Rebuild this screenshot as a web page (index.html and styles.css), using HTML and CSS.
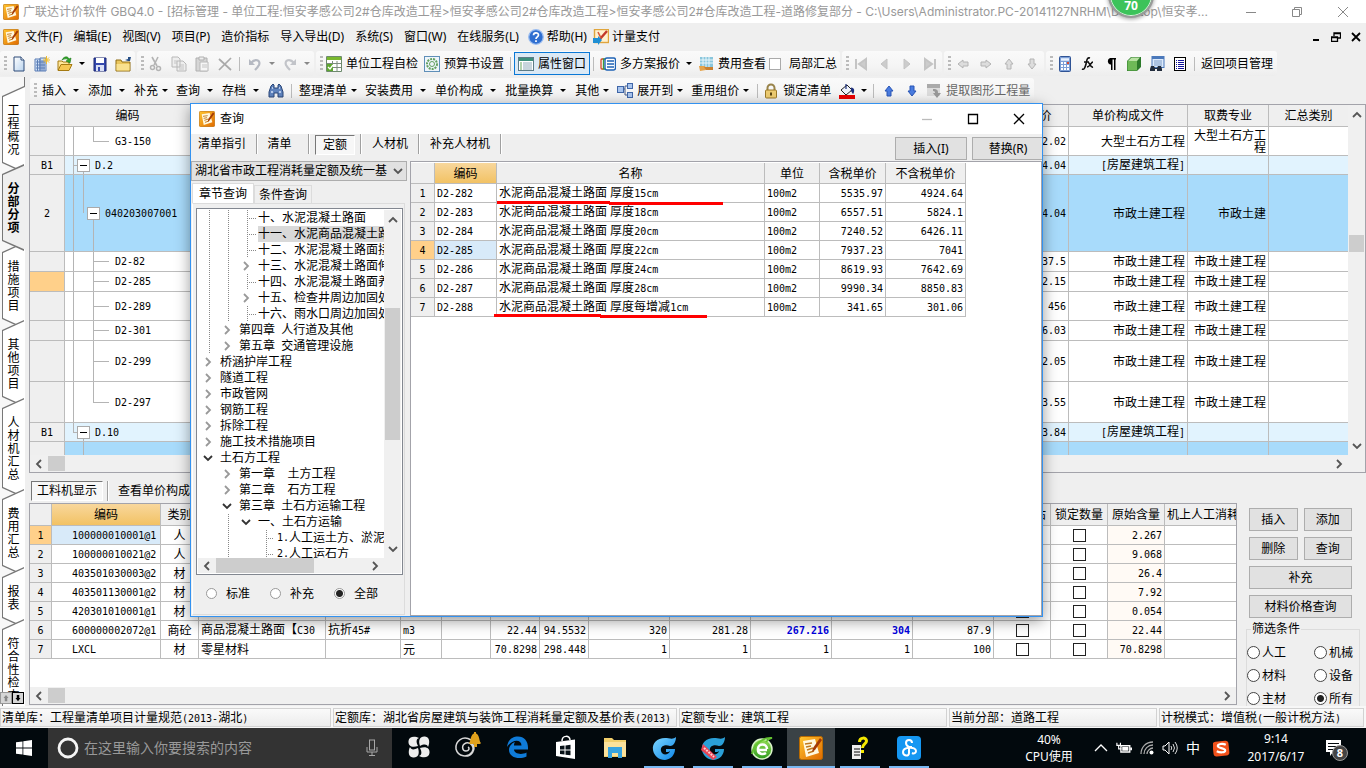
FILE: index.html
```html
<!DOCTYPE html>
<html lang="zh-CN">
<head>
<meta charset="utf-8">
<title>广联达计价软件 GBQ4.0</title>
<link rel="stylesheet" href="styles.css">
</head>
<body>
<svg class="defs" aria-hidden="true">
  <defs>
    <linearGradient id="gOrange" x1="0" y1="0" x2="1" y2="1"><stop offset="0" stop-color="#ffc52e"/><stop offset="1" stop-color="#e06a00"/></linearGradient>
    <linearGradient id="gPage" x1="0" y1="0" x2="1" y2="1"><stop offset="0" stop-color="#fff"/><stop offset="1" stop-color="#b9d3ee"/></linearGradient>
    <linearGradient id="gSwirl" x1="0" y1="0" x2="1" y2="1"><stop offset="0" stop-color="#7fd8ff"/><stop offset="1" stop-color="#0a84e8"/></linearGradient>
    <linearGradient id="gGreen" x1="0" y1="0" x2="0" y2="1"><stop offset="0" stop-color="#9be05a"/><stop offset="1" stop-color="#2c9a1c"/></linearGradient>
    <symbol id="app" viewBox="0 0 24 24"><rect x="0.5" y="0.5" width="23" height="23" rx="2" fill="url(#gOrange)" stroke="#b96a00"/><path d="M4 5l12-2 4 14-13 4z" fill="#fff8df"/><path d="M6 8l7-1M7 11l5-1M8 14l6-2M9 17l6-2" stroke="#c07a20" stroke-width="1.4"/><path d="M21 2l-7 10-1 4 3-2 7-10z" fill="#a33a06"/></symbol>
    <symbol id="new" viewBox="0 0 16 16"><path d="M3 1h7l3 3v11H3z" fill="url(#gPage)" stroke="#2d4a78"/><path d="M10 1v3h3" fill="#fff" stroke="#2d4a78"/></symbol>
    <symbol id="newproj" viewBox="0 0 16 16"><path d="M1 3h5v12H1zM6 2h6v13H6z" fill="#cfe0f6" stroke="#5a7db5"/><path d="M2 6h9M2 9h9M2 12h9M8 4v11M10 4v11M3.500 4v11" stroke="#5a7db5"/><path d="M12.500 0v8M9 4h7M10 1.500l5 5M15 1.500l-5 5" stroke="#efbc2a"/></symbol>
    <symbol id="open" viewBox="0 0 16 16"><path d="M1 14V5h4l1 1h6v2" fill="#ffe79a" stroke="#a57a12"/><path d="M1 14.500l3-6h11l-3 6z" fill="#f5c752" stroke="#a57a12"/><path d="M5 4c2-4 6-4 7-1l2-1-1 5-4-2 2-1c-1-2-4-1-6 0z" fill="#31a52b" stroke="#157512" stroke-width=".6"/></symbol>
    <symbol id="save" viewBox="0 0 16 16"><path d="M2 2h12v13H2z" fill="#3448ad" stroke="#1b2672"/><rect x="4" y="2" width="8" height="5" fill="#fff"/><rect x="4" y="9" width="8" height="6" fill="#d9dff5"/><rect x="6" y="11" width="2" height="4" fill="#3448ad"/></symbol>
    <symbol id="folder" viewBox="0 0 16 16"><path d="M1 4h5l1 2h8v9H1z" fill="#eac65d" stroke="#8f6d14"/><path d="M1.500 8h13v6.500h-13z" fill="#f9e18f"/><path d="M10 4l3-1 0-2 3 0-1 4-2 0z" fill="#274f86"/></symbol>
    <symbol id="cut" viewBox="0 0 16 16"><path d="M4 1l5 9M10 1L6 9" stroke="#b4b4b4" stroke-width="1.600"/><circle cx="4.500" cy="11.500" r="2" fill="none" stroke="#b4b4b4" stroke-width="1.500"/><circle cx="10.500" cy="12.500" r="2" fill="none" stroke="#b4b4b4" stroke-width="1.500"/></symbol>
    <symbol id="copy" viewBox="0 0 16 16"><path d="M1 1h6l2 2v8H1zM6 5h6l3 3v7H6z" fill="#eee" stroke="#b8b8b8"/><path d="M8 9h5M8 11h5M8 13h5M3 5h3M3 7h3" stroke="#c4c4c4"/></symbol>
    <symbol id="paste" viewBox="0 0 16 16"><path d="M2 2h11v13H2z" fill="#d6d6d6" stroke="#b0b0b0"/><path d="M5 1h5v3H5z" fill="#eee" stroke="#b0b0b0"/><path d="M6 6h8v9H6z" fill="#f6f6f6" stroke="#b8b8b8"/><path d="M8 9h5M8 11h5" stroke="#c4c4c4"/></symbol>
    <symbol id="del" viewBox="0 0 16 16"><path d="M2 3l12 11M14 2L2 14" stroke="#aaa" stroke-width="1.700" fill="none"/></symbol>
    <symbol id="undo" viewBox="0 0 16 16"><path d="M4 7c4-5 10-3 8 2-1 2-3 4-4 5" fill="none" stroke="#b5b9c2" stroke-width="2.200"/><path d="M2 3v6h6z" fill="#b5b9c2"/></symbol>
    <symbol id="redo" viewBox="0 0 16 16"><path d="M12 7C8 2 2 4 4 9c1 2 3 4 4 5" fill="none" stroke="#c2c4c9" stroke-width="2.200"/><path d="M14 3v6H8z" fill="#c2c4c9"/></symbol>
    <symbol id="check" viewBox="0 0 16 16"><path d="M.5.5h15v15H.5z" fill="#fff" stroke="#6d8a6d"/><path d="M1 1h14v3H1z" fill="#79b82e"/><path d="M1 7.500h14M1 11.500h14M6.500 5v10M11 5v10" stroke="#7c8c7c"/><path d="M1 8h6v7H1z" fill="#5fa830"/><path d="M2 11l2 2 3-4" stroke="#fff" fill="none" stroke-width="1.300"/></symbol>
    <symbol id="gear" viewBox="0 0 16 16"><rect x=".5" y=".5" width="15" height="15" fill="#eef5fb" stroke="#5f8fb8"/><circle cx="8" cy="8" r="5" fill="none" stroke="#63a05f" stroke-width="2" stroke-dasharray="2 1"/><circle cx="8" cy="8" r="2.500" fill="none" stroke="#63a05f"/></symbol>
    <symbol id="prop" viewBox="0 0 16 16"><rect x=".5" y="1.500" width="15" height="13" fill="#fff" stroke="#5d7c87"/><path d="M1 2h14v3H1z" fill="#3c8f7d"/><path d="M2 7h2M2 9h2M2 11h2M2 13h2" stroke="#62a35c"/><path d="M5 7h9M5 9h9M5 11h9M5 13h9" stroke="#8faaba"/></symbol>
    <symbol id="multi" viewBox="0 0 16 16"><path d="M3.500 3H2a1 1 0 00-1 1v8a1 1 0 001 1h1.500" fill="none" stroke="#d3482a" stroke-width="1.300"/><path d="M5 3H3.500v10H5" fill="#fff" stroke="#3f9b38" stroke-width="1.300"/><rect x="5" y="2" width="10.500" height="12" rx="2" fill="#fff" stroke="#1f63b5" stroke-width="1.400"/><path d="M7 5h7M7 8h7M7 11h7" stroke="#1f63b5" stroke-width="1.300"/></symbol>
    <symbol id="fee" viewBox="0 0 16 16"><rect x="2" y="1" width="13" height="10" fill="#8ac6dc"/><path d="M2 4h13M2 7h13M5 1v10M8 1v10M11 1v10" stroke="#e9f6fa"/><path d="M1 10h6l1 4-6 1z" fill="#e5a34a"/><path d="M6 11h9v3H8z" fill="#ca8130"/></symbol>
    <symbol id="first" viewBox="0 0 16 16"><path d="M3 3v10M13 3l-7 5 7 5z" fill="#ccc" stroke="#c4c4c4" stroke-width="2"/></symbol>
    <symbol id="prev" viewBox="0 0 16 16"><path d="M11 3L5 8l6 5z" fill="#ccc" stroke="#c4c4c4"/></symbol>
    <symbol id="next" viewBox="0 0 16 16"><path d="M5 3l6 5-6 5z" fill="#ccc" stroke="#c4c4c4"/></symbol>
    <symbol id="last" viewBox="0 0 16 16"><path d="M13 3v10M3 3l7 5-7 5z" fill="#ccc" stroke="#c4c4c4" stroke-width="2"/></symbol>
    <symbol id="al" viewBox="0 0 16 16"><path d="M3 8l5-4v2h5v4H8v2z"/></symbol>
    <symbol id="ar" viewBox="0 0 16 16"><path d="M13 8L8 4v2H3v4h5v2z"/></symbol>
    <symbol id="au" viewBox="0 0 16 16"><path d="M8 3l4 5h-2v5H6V8H4z"/></symbol>
    <symbol id="ad" viewBox="0 0 16 16"><path d="M8 13l4-5h-2V3H6v5H4z"/></symbol>
    <symbol id="calc" viewBox="0 0 16 16"><rect x="2.500" y=".5" width="11" height="15" rx="1" fill="#7d9fd6" stroke="#2f5395"/><path d="M4 3.500h8" stroke="#e8f2ff" stroke-width="2.500"/><path d="M4 7h8M4 10h8M4 13h8" stroke="#fff" stroke-width="1.800" stroke-dasharray="2 1"/><path d="M10 7h2" stroke="#d84a32" stroke-width="2"/></symbol>
    <symbol id="fx" viewBox="0 0 16 16"><path d="M10 2C7 1 7 4 6 8s-2 6-4 5M4 6h5M8 7c2-1 2 5 5 4M13 6c-2 0-3 5-6 5" fill="none" stroke="#111" stroke-width="1.600"/></symbol>
    <symbol id="para" viewBox="0 0 16 16"><path d="M13 2H7a3.500 3.500 0 000 6.500h1V14h1.500V3.500H11V14h1.500V3.500H13z" fill="#000"/></symbol>
    <symbol id="cube" viewBox="0 0 16 16"><path d="M1 5l4-4h10v10l-4 4H1z" fill="#2c7a2a"/><path d="M1.500 5h9.500v9.500H1.500z" fill="#6eb957"/><path d="M2 5l3.500-3.500H14L11 5z" fill="#b9e2a4"/></symbol>
    <symbol id="find" viewBox="0 0 16 16"><rect x="3" y=".5" width="12" height="11" fill="#dceafb" stroke="#4b79bb"/><path d="M3 1h12v2H3z" fill="#4b79bb"/><path d="M5 5h8M5 7h8M5 9h8" stroke="#7e9dc8"/><path d="M2 10h3l1 2h2l1-2h3l1 3v2H8v-2H6v2H1v-2z" fill="#222c3c"/></symbol>
    <symbol id="list" viewBox="0 0 16 16"><rect x="2.500" y="1.500" width="11" height="13" fill="#fff" stroke="#000"/><path d="M4 4.500h1M4 6.500h1M4 8.500h1M4 10.500h1M4 12.500h1M6 4.500h6M6 6.500h6M6 8.500h6M6 10.500h6M6 12.500h6" stroke="#12129a"/></symbol>
    <symbol id="bino" viewBox="0 0 16 16"><path d="M3 3l2-2 1 1v3h4V2l1-1 2 2 2 6v5h-5v-4H6v4H1V9z" fill="#5f83bd" stroke="#2a4678"/><path d="M3 9h2M11 9h2M4 5h1M11 5h1" stroke="#d7e5fa" stroke-width="1.500"/></symbol>
    <symbol id="expand" viewBox="0 0 16 16"><path d="M5 6h3V3h3M8 6v6h3" fill="none" stroke="#445a86"/><rect x=".5" y="3.500" width="6" height="6" fill="#a9c5ee" stroke="#3f66a8"/><rect x="10.500" y=".5" width="5" height="5" fill="#a9c5ee" stroke="#3f66a8"/><rect x="10.500" y="9.500" width="5" height="5" fill="#a9c5ee" stroke="#3f66a8"/></symbol>
    <symbol id="lock" viewBox="0 0 16 16"><path d="M4.500 8V5a3.500 3.500 0 017 0v3" fill="none" stroke="#98834a" stroke-width="2"/><rect x="2.500" y="7" width="11" height="8" rx="1" fill="#edcc72" stroke="#9b7928"/><path d="M8 9.500v3" stroke="#5c4613" stroke-width="2"/></symbol>
    <symbol id="paint" viewBox="0 0 16 16"><path d="M2 7l6-5 5 5-6 5z" fill="#eef2fb" stroke="#222"/><path d="M7 1v5M12 5c3 0 3 3 2 5l-2-3" fill="#1c2f7c" stroke="#1c2f7c" stroke-width="1.200"/><path d="M0 12h16v4H0z" fill="#e80000"/></symbol>
    <symbol id="extract" viewBox="0 0 16 16"><rect x="1" y="1" width="13" height="4" fill="#aaa"/><rect x="1" y="5" width="13" height="8" fill="#dcdcdc"/><path d="M7 6c5 0 5 2 5 4h3l-4 5-4-5h2c0-1 0-2-2-2z" fill="#999"/></symbol>
    <symbol id="help" viewBox="0 0 16 16"><circle cx="8" cy="8" r="7.300" fill="#2f6fd0" stroke="#9bbdf0" stroke-width="1.300"/><path d="M5.500 6.300c0-3.200 5-3.200 5-.3 0 1.900-2.500 1.800-2.500 4M8 11.300v1.600" fill="none" stroke="#fff" stroke-width="1.700"/></symbol>
    <symbol id="pay" viewBox="0 0 16 16"><rect x="1.500" y=".5" width="14" height="13" fill="#fff1cf" stroke="#e0a53c" stroke-width="1.400"/><path d="M14 2L7 10" stroke="#c3382a" stroke-width="2.400"/><path d="M5 3l3 6" stroke="#d55b3c" stroke-width="1.600"/><path d="M0 9h5V7l4 4-4 5v-2H0z" fill="#1f8fd4"/></symbol>
    <symbol id="chev" viewBox="0 0 10 10"><path d="M3 1l4 4-4 4" fill="none" stroke="currentColor" stroke-width="1.800"/></symbol>
  </defs>
</svg>

<header class="titlebar">
  <svg class="i16"><use href="#app"/></svg>
  <h1>广联达计价软件 GBQ4.0 - [招标管理 - 单位工程:恒安孝感公司2#仓库改造工程&gt;恒安孝感公司2#仓库改造工程&gt;恒安孝感公司2#仓库改造工程-道路修复部分 - C:\Users\Administrator.PC-20141127NRHM\Desktop\恒安孝...</h1>
  <div class="winbtns">
    <button aria-label="最小化"><svg viewBox="0 0 12 12"><path d="M1 6.500h10"/></svg></button>
    <button aria-label="还原"><svg viewBox="0 0 12 12"><path d="M1.500 3.500h7v7h-7zM3.500 3V1.500h7v7H9"/></svg></button>
    <button aria-label="关闭"><svg viewBox="0 0 12 12"><path d="M1 1l10 10M11 1L1 11"/></svg></button>
  </div>
  <span class="ball">70</span>
</header>

<nav class="menubar">
  <svg class="i16"><use href="#app"/></svg>
  <a href="#">文件(F)</a><a href="#">编辑(E)</a><a href="#">视图(V)</a><a href="#">项目(P)</a><a href="#">造价指标</a><a href="#">导入导出(D)</a><a href="#">系统(S)</a><a href="#">窗口(W)</a><a href="#">在线服务(L)</a>
  <a href="#" class="pic"><svg class="i16"><use href="#help"/></svg>帮助(H)</a>
  <a href="#" class="pic"><svg class="i16"><use href="#pay"/></svg>计量支付</a>
  <div class="mdi">
    <button aria-label="最小化子窗口"><svg viewBox="0 0 10 10"><path d="M2 8h6" stroke-width="2"/></svg></button>
    <button aria-label="还原子窗口"><svg viewBox="0 0 10 10"><path d="M.5 5h6v4.500h-6zM.5 5.500h6M3 4V1h6.500v5H7M3 1.500h6.500"/></svg></button>
    <button aria-label="关闭子窗口"><svg viewBox="0 0 10 10"><path d="M1 1l8 8M9 1L1 9" stroke-width="1.800"/></svg></button>
  </div>
</nav>

<div class="toolbars">
  <div class="tgroup">
    <i class="grip"></i>
    <button class="ib" aria-label="新建"><svg class="i16"><use href="#new"/></svg></button>
    <button class="ib" aria-label="新建项目"><svg class="i16"><use href="#newproj"/></svg></button>
    <button class="ib" aria-label="打开"><svg class="i16"><use href="#open"/></svg></button>
    <i class="arr"></i>
    <button class="ib" aria-label="保存"><svg class="i16"><use href="#save"/></svg></button>
    <button class="ib" aria-label="文件夹"><svg class="i16"><use href="#folder"/></svg></button>
  </div>
  <div class="tgroup">
    <i class="grip"></i>
    <button class="ib" aria-label="剪切"><svg class="i16"><use href="#cut"/></svg></button>
    <button class="ib" aria-label="复制"><svg class="i16"><use href="#copy"/></svg></button>
    <button class="ib" aria-label="粘贴"><svg class="i16"><use href="#paste"/></svg></button>
    <button class="ib" aria-label="删除"><svg class="i16"><use href="#del"/></svg></button>
    <i class="sep"></i>
    <button class="ib" aria-label="撤销"><svg class="i16"><use href="#undo"/></svg></button>
    <i class="arr dim"></i>
    <button class="ib" aria-label="重做"><svg class="i16"><use href="#redo"/></svg></button>
    <i class="arr dim"></i>
  </div>
  <div class="tgroup">
    <i class="grip"></i>
    <button class="tb"><svg class="i16"><use href="#check"/></svg>单位工程自检</button>
    <button class="tb"><svg class="i16"><use href="#gear"/></svg>预算书设置</button>
    <i class="sep"></i>
    <button class="tb on"><svg class="i16"><use href="#prop"/></svg>属性窗口</button>
    <i class="sep"></i>
    <button class="tb"><svg class="i16"><use href="#multi"/></svg>多方案报价</button>
    <i class="arr"></i>
    <button class="tb"><svg class="i16"><use href="#fee"/></svg>费用查看</button>
    <label class="part"><input type="checkbox">局部汇总</label>
  </div>
  <div class="tgroup">
    <i class="grip"></i>
    <button class="ib" aria-label="首条"><svg class="i16"><use href="#first"/></svg></button>
    <button class="ib" aria-label="上一条"><svg class="i16"><use href="#prev"/></svg></button>
    <button class="ib" aria-label="下一条"><svg class="i16"><use href="#next"/></svg></button>
    <button class="ib" aria-label="末条"><svg class="i16"><use href="#last"/></svg></button>
  </div>
  <div class="tgroup gray">
    <i class="grip"></i>
    <button class="ib" aria-label="左移"><svg class="i16"><use href="#al"/></svg></button>
    <button class="ib" aria-label="右移"><svg class="i16"><use href="#ar"/></svg></button>
    <button class="ib" aria-label="上移"><svg class="i16"><use href="#au"/></svg></button>
    <button class="ib" aria-label="下移"><svg class="i16"><use href="#ad"/></svg></button>
  </div>
  <div class="tgroup">
    <i class="grip"></i>
    <button class="ib" aria-label="计算器"><svg class="i16"><use href="#calc"/></svg></button>
    <button class="ib" aria-label="函数"><svg class="i16"><use href="#fx"/></svg></button>
    <button class="ib" aria-label="段落"><svg class="i16"><use href="#para"/></svg></button>
    <button class="ib" aria-label="图元"><svg class="i16"><use href="#cube"/></svg></button>
    <button class="ib" aria-label="查找"><svg class="i16"><use href="#find"/></svg></button>
    <button class="ib" aria-label="列表"><svg class="i16"><use href="#list"/></svg></button>
    <i class="sep"></i>
    <button class="tb">返回项目管理</button>
  </div>
</div>

<div class="work">
  <nav class="side">
    <a href="#"><span>工程概况</span></a>
    <a href="#" class="on"><span>分部分项</span></a>
    <a href="#"><span>措施项目</span></a>
    <a href="#"><span>其他项目</span></a>
    <a href="#"><span>人材机汇总</span></a>
    <a href="#"><span>费用汇总</span></a>
    <a href="#"><span>报表</span></a>
    <a href="#"><span>符合性检查</span></a>
    <div class="spin">
      <button aria-label="向上" class="off"><svg viewBox="0 0 16 16"><use href="#au"/></svg></button>
      <button aria-label="向下"><svg viewBox="0 0 16 16"><use href="#ad"/></svg></button>
    </div>
  </nav>

  <main class="main">
    <div class="toolbars second">
      <div class="tgroup">
        <i class="grip"></i>
        <button class="mb w">插入</button><button class="mb w">添加</button><button class="mb">补充</button><button class="mb w">查询</button><button class="mb w">存档</button>
        <svg class="i16"><use href="#bino"/></svg>
        <i class="sep wide"></i>
        <button class="mb">整理清单</button><button class="mb w">安装费用</button><button class="mb w">单价构成</button><button class="mb w">批量换算</button><button class="mb">其他</button>
        <button class="mb"><svg class="i16"><use href="#expand"/></svg>展开到</button><button class="mb">重用组价</button>
        <button class="tb locked"><svg class="i16"><use href="#lock"/></svg>锁定清单</button>
        <button class="ib" aria-label="填充颜色"><svg class="i16"><use href="#paint"/></svg></button>
        <i class="arr"></i>
        <i class="sep"></i>
        <button class="ib blue" aria-label="上移"><svg class="i16"><use href="#au"/></svg></button>
        <button class="ib blue" aria-label="下移"><svg class="i16"><use href="#ad"/></svg></button>
        <button class="tb dimtext"><svg class="i16"><use href="#extract"/></svg>提取图形工程量</button>
      </div>
    </div>

    <section class="pane upper">
      <div class="pane-row">
        <div class="view">
          <table class="grid bill">
            <colgroup><col class="c35"><col class="c126"><col><col class="c58"><col class="c119"><col class="c81"><col class="c79"></colgroup>
            <thead><tr><th></th><th>编码</th><th></th><th>单价</th><th>单价构成文件</th><th>取费专业</th><th>汇总类别</th></tr></thead>
            <tbody>
              <tr class="h29"><th></th><td class="tree leaf end">G3-150</td><td></td><td class="num">2.02</td><td class="r">大型土石方工程</td><td class="r">大型土石方工程</td><td></td></tr>
              <tr class="h19 sec"><th>B1</th><td class="tree l1"><i class="box"></i>D.2</td><td></td><td class="num">4.04</td><td class="r"><span class="n">[</span>房屋建筑工程<span class="n">]</span></td><td></td><td></td></tr>
              <tr class="h77 sel"><th>2</th><td class="tree l2"><i class="box"></i>040203007001</td><td></td><td class="num">4.04</td><td class="r">市政土建工程</td><td class="r">市政土建</td><td></td></tr>
              <tr class="h20"><th></th><td class="tree leaf">D2-82</td><td></td><td class="num">37.5</td><td class="r">市政土建工程</td><td class="r">市政土建工程</td><td></td></tr>
              <tr class="h20"><th class="cur"></th><td class="tree leaf">D2-285</td><td></td><td class="num">2.15</td><td class="r">市政土建工程</td><td class="r">市政土建工程</td><td></td></tr>
              <tr class="h29"><th></th><td class="tree leaf">D2-289</td><td></td><td class="num">456</td><td class="r">市政土建工程</td><td class="r">市政土建工程</td><td></td></tr>
              <tr class="h20"><th></th><td class="tree leaf">D2-301</td><td></td><td class="num">6.03</td><td class="r">市政土建工程</td><td class="r">市政土建工程</td><td></td></tr>
              <tr class="h41"><th></th><td class="tree leaf">D2-299</td><td></td><td class="num">2.05</td><td class="r">市政土建工程</td><td class="r">市政土建工程</td><td></td></tr>
              <tr class="h41"><th></th><td class="tree leaf end">D2-297</td><td></td><td class="num">3.55</td><td class="r">市政土建工程</td><td class="r">市政土建工程</td><td></td></tr>
              <tr class="h19 sec"><th>B1</th><td class="tree l1 end"><i class="box"></i>D.10</td><td></td><td class="num">3.84</td><td class="r"><span class="n">[</span>房屋建筑工程<span class="n">]</span></td><td></td><td></td></tr>
              <tr class="h13 sel"><th></th><td class="tree cont"></td><td></td><td></td><td></td><td></td><td></td></tr>
            </tbody>
          </table>
        </div>
        <div class="vs"><svg class="up"><use href="#chev"/></svg><i class="thumb low"></i><svg class="down"><use href="#chev"/></svg></div>
      </div>
      <div class="hs corner"><svg class="left"><use href="#chev"/></svg><i class="thumb"></i><svg class="right"><use href="#chev"/></svg></div>
    </section>

    <div class="subtabs">
      <button class="pressed">工料机显示</button><i class="tsep"></i><button>查看单价构成</button>
    </div>

    <div class="bottom">
      <section class="pane lower">
        <div class="view fill">
          <table class="grid res">
            <colgroup><col class="c22"><col class="c109"><col class="c38"><col class="c127"><col class="c75"><col class="c41"><col class="c49"><col class="c49"><col class="c49"><col class="c81"><col class="c81"><col class="c81"><col class="c81"><col class="c81"><col class="c57"><col class="c57"><col class="c57"><col></colgroup>
            <thead><tr><th></th><th class="hot">编码</th><th>类别</th><th></th><th></th><th></th><th></th><th></th><th></th><th></th><th></th><th></th><th></th><th></th><th>是否暂估</th><th>锁定数量</th><th>原始含量</th><th class="clip">机上人工消耗</th></tr></thead>
            <tbody>
              <tr><th class="cur">1</th><td class="code pick">100000010001@1</td><td class="c">人</td><td></td><td></td><td></td><td></td><td></td><td></td><td></td><td></td><td></td><td></td><td></td><td class="c"><input type="checkbox" aria-label="暂估 1"></td><td class="c"><input type="checkbox" aria-label="锁定 1"></td><td class="num raw">2.267</td><td></td></tr>
              <tr><th>2</th><td class="code">100000010021@2</td><td class="c">人</td><td></td><td></td><td></td><td></td><td></td><td></td><td></td><td></td><td></td><td></td><td></td><td class="c"><input type="checkbox" aria-label="暂估 2"></td><td class="c"><input type="checkbox" aria-label="锁定 2"></td><td class="num raw">9.068</td><td></td></tr>
              <tr><th>3</th><td class="code">403501030003@2</td><td class="c">材</td><td></td><td></td><td></td><td></td><td></td><td></td><td></td><td></td><td></td><td></td><td></td><td class="c"><input type="checkbox" aria-label="暂估 3"></td><td class="c"><input type="checkbox" aria-label="锁定 3"></td><td class="num raw">26.4</td><td></td></tr>
              <tr><th>4</th><td class="code">403501130001@2</td><td class="c">材</td><td></td><td></td><td></td><td></td><td></td><td></td><td></td><td></td><td></td><td></td><td></td><td class="c"><input type="checkbox" aria-label="暂估 4"></td><td class="c"><input type="checkbox" aria-label="锁定 4"></td><td class="num raw">7.92</td><td></td></tr>
              <tr><th>5</th><td class="code">420301010001@1</td><td class="c">材</td><td></td><td></td><td></td><td></td><td></td><td></td><td></td><td></td><td></td><td></td><td></td><td class="c"><input type="checkbox" aria-label="暂估 5"></td><td class="c"><input type="checkbox" aria-label="锁定 5"></td><td class="num raw">0.054</td><td></td></tr>
              <tr><th>6</th><td class="code">600000002072@1</td><td class="c">商砼</td><td>商品混凝土路面【<span class="n">C30</span></td><td>抗折<span class="n">45#</span></td><td class="n">m3</td><td></td><td class="num">22.44</td><td class="num">94.5532</td><td class="num">320</td><td class="num">281.28</td><td class="num hi">267.216</td><td class="num hi">304</td><td class="num">87.9</td><td class="c"><input type="checkbox" aria-label="暂估 6"></td><td class="c"><input type="checkbox" aria-label="锁定 6"></td><td class="num raw">22.44</td><td></td></tr>
              <tr><th>7</th><td class="code">LXCL</td><td class="c">材</td><td>零星材料</td><td></td><td>元</td><td></td><td class="num">70.8298</td><td class="num">298.448</td><td class="num">1</td><td class="num">1</td><td class="num">1</td><td class="num">1</td><td class="num">100</td><td class="c"><input type="checkbox" aria-label="暂估 7"></td><td class="c"><input type="checkbox" aria-label="锁定 7"></td><td class="num raw">70.8298</td><td></td></tr>
            </tbody>
          </table>
        </div>
        <div class="hs"><svg class="left"><use href="#chev"/></svg><i class="thumb"></i><svg class="right"><use href="#chev"/></svg></div>
      </section>
      <aside class="actions">
        <div class="btns">
          <button class="btn">插入</button><button class="btn">添加</button>
          <button class="btn">删除</button><button class="btn">查询</button>
          <button class="btn full">补充</button>
          <button class="btn full">材料价格查询</button>
        </div>
        <fieldset>
          <legend>筛选条件</legend>
          <label><input type="radio" name="flt">人工</label><label><input type="radio" name="flt">机械</label>
          <label><input type="radio" name="flt">材料</label><label><input type="radio" name="flt">设备</label>
          <label><input type="radio" name="flt">主材</label><label><input type="radio" name="flt" checked>所有</label>
        </fieldset>
      </aside>
    </div>
  </main>
</div>

<footer class="status">
  <span class="s1">清单库：工程量清单项目计量规范<b class="n">(2013-</b>湖北<b class="n">)</b></span>
  <span class="s2">定额库：湖北省房屋建筑与装饰工程消耗量定额及基价表<b class="n">(2013)</b></span>
  <span class="s3">定额专业：建筑工程</span>
  <span class="s4">当前分部：道路工程</span>
  <span class="s5">计税模式：增值税<b class="n">(</b>一般计税方法<b class="n">)</b></span>
</footer>

<div class="taskbar">
  <button class="start" aria-label="开始"><svg viewBox="0 0 16 16"><path d="M0 2.300l6.500-.9v6.200H0zM7.300 1.300L16 0v7.600H7.300zM0 8.400h6.500v6.200L0 13.700zM7.300 8.400H16V16l-8.700-1.300z" fill="#fff"/></svg></button>
  <label class="search">
    <svg class="cort" viewBox="0 0 22 22"><circle cx="11" cy="11" r="9" fill="none" stroke="#f4f4f4" stroke-width="2.800"/></svg>
    <input type="text" placeholder="在这里输入你要搜索的内容" aria-label="搜索">
    <svg class="mic" viewBox="0 0 12 18"><rect x="3.500" y="1" width="5" height="10" fill="none" stroke="#a8a8a8"/><path d="M1 8v5h10V8M6 13v4M3 16.500h6" fill="none" stroke="#a8a8a8"/></svg>
  </label>
  <div class="apps">
    <button aria-label="应用 1"><svg viewBox="0 0 24 24"><path d="M11 11C5 13 1 11 1.500 6S8 1 12 3c-3 1-3 4-1 8zM13 11c-2-6 0-10 5-9.500S23 8 21 12c-1-3-4-3-8-1zM13 13c6-2 10 0 9.500 5S16 23 12 21c3-1 3-4 1-8zM11 13c2 6 0 10-5 9.500S1 16 3 12c1 3 4 3 8 1z" fill="#eee"/></svg></button>
    <button aria-label="应用 2" class="big"><svg viewBox="0 0 28 28"><path d="M17 9C9 4 1 10 2 18c2 8 12 9 16 3 3-5-1-10-6-9-5 2-4 8 0 8 3 0 4-3 2-4M18 12c5 7-1 14-8 13" fill="none" stroke="#d8d8d8" stroke-width="1.500"/><path d="M15 12c2-1 1-9 6-10 5 1 4 9 6 10l-1 1H16zM20 13h3v3h-3zM20 1h2v2h-2z" fill="#e0a11c"/></svg></button>
    <button aria-label="Edge"><svg viewBox="0 0 24 24"><path d="M2 12C3 4 8 1.500 13 1.500c6 0 10 4.500 10 11v2H9c0 4 7 6 12.500 3v4C14 25 4 22.500 4 15c0-4 3-7 6-8-1 1.500-1 3-1 3.500h7.500C16.500 4 7 4 2 12z" fill="#0f7bd8"/></svg></button>
    <button aria-label="商店"><svg viewBox="0 0 24 24"><path d="M2 7l19-2.500V24L2 21z" fill="#fff"/><path d="M8 6c0-6 8-6 8-1" fill="none" stroke="#fff" stroke-width="1.500"/><path d="M6 11l4.500-.5v4H6zM11.500 10.400l5-.6v4.700h-5zM6 15.500h4.500v4L6 19zM11.500 15.500h5v4.800l-5-.6z" fill="#061016"/></svg></button>
    <button aria-label="资源管理器"><svg viewBox="0 0 24 24"><path d="M1 3h8l2 2h12v17H1z" fill="#f2cf6b"/><path d="M1 7h22v14H1z" fill="#fce29b"/><path d="M5 12h14v11h-4v-5H9v5H5z" fill="#38a4e0"/></svg></button>
    <button aria-label="浏览器 1" class="run"><svg viewBox="0 0 24 24"><path d="M24 1c-3 3-7 1-11 1C5 2 0 7 1 14c1 6 6 10 12 10 6-1 10-5 10-11h-9v3c2 0 3 0 4-1-1 4-8 5-9 0-1-5 4-7 9-5 4 0 6-5 6-9z" fill="url(#gSwirl)"/></svg></button>
    <button aria-label="浏览器 2" class="run"><svg viewBox="0 0 24 24"><path d="M24 1c-3 3-7 1-11 1C5 2 0 7 1 14c1 6 6 10 12 10 6-1 10-5 10-11h-9v3c2 0 3 0 4-1-1 4-8 5-9 0-1-5 4-7 9-5 4 0 6-5 6-9z" fill="#2aa0d8"/><path d="M2 8l14 13-4 3L0 14z" fill="#ea4456"/><path d="M3 12l10 9" stroke="#ffd0d0" stroke-width="2" stroke-dasharray="2 1"/></svg></button>
    <button aria-label="浏览器 3" class="run"><svg viewBox="0 0 24 24"><circle cx="12" cy="13" r="10" fill="url(#gGreen)" stroke="#d9f4c8" stroke-width="1.500"/><path d="M17 14H8c0 4 5 5 8 3M8 13c0-6 9-6 9 0" fill="none" stroke="#fff" stroke-width="2.600"/><path d="M2 18C3 9 13 1 22 2c-4 1-6 4-6 4" fill="none" stroke="#64c332" stroke-width="1.800"/></svg></button>
    <button aria-label="广联达" class="run cur"><svg viewBox="0 0 24 24"><use href="#app"/></svg></button>
    <button aria-label="帮助工具" class="run"><svg viewBox="0 0 24 24"><path d="M4 9h9v14H4z" fill="#eee"/><path d="M6 13h6M6 16h6M6 19h6" stroke="#555" stroke-width="1.500"/><path d="M11.500 6c0-5 7-5 7-1 0 3-4 3-4 7M14.500 14v3" fill="none" stroke="#f4e800" stroke-width="3"/></svg></button>
    <button aria-label="应用 3" class="run"><svg viewBox="0 0 24 24"><rect width="24" height="24" rx="4" fill="#1597f2"/><path d="M15 7c0-4-6-4-6 0 0 2 1 3 3 4v6c0 4-6 3-6-1 0-5 13-6 13-1 0 2-2 3-4 2M12 11h3" fill="none" stroke="#fff" stroke-width="2"/></svg></button>
  </div>
  <div class="tray">
    <div class="cpu">40%<br>CPU使用</div>
    <button aria-label="显示隐藏图标"><svg viewBox="0 0 14 14"><path d="M1 10l6-6 6 6" fill="none" stroke="#fff" stroke-width="1.300"/></svg></button>
    <button aria-label="电源"><svg viewBox="0 0 18 14"><path d="M5.500 4.500h10v7h-10z" fill="none" stroke="#fff" stroke-width="1.500"/><path d="M7 6h7v4H7zM16 6.500h2v3h-2z" fill="#fff"/><path d="M1 1v3h4V1M3 4v4h3" fill="none" stroke="#fff" stroke-width="1.300"/></svg></button>
    <button aria-label="网络"><svg viewBox="0 0 14 14"><path d="M1 13C1 6 6 1 13 1M4 13c0-5 4-9 9-9M7 13c0-3 3-6 6-6" fill="none" stroke="#aaa" stroke-width="1.300"/><circle cx="11.500" cy="11.500" r="2" fill="#fff"/></svg></button>
    <button aria-label="音量"><svg viewBox="0 0 16 14"><path d="M1 5h2l4-4v12L3 9H1z" fill="none" stroke="#fff"/><path d="M9 5q1.500 2 0 4M11 3q3 4 0 8M13 1q4.500 6 0 12" fill="none" stroke="#ddd"/></svg></button>
    <span class="ime">中</span>
    <svg class="sogou" viewBox="0 0 16 16"><rect y="1" width="15" height="14" rx="3" fill="#f2511b" transform="rotate(-6 8 8)"/><path d="M12 4.500c-3-1.500-7.500-.8-7.500 1.200 0 2.300 7 1.600 7 4.100 0 2.300-5 2.200-8 .8" fill="none" stroke="#fff" stroke-width="2"/></svg>
    <time>9:14<br>2017/6/17</time>
    <div class="note"><svg viewBox="0 0 18 18"><path d="M1 1h15v12H8l-3 4v-4H1z" fill="#fff"/><path d="M3 4.500h11M3 7.500h11M3 10.500h8" stroke="#02090d"/></svg><span>8</span></div>
  </div>
</div>

<section class="dialog" role="dialog" aria-label="查询">
  <header>
    <svg class="i16"><use href="#app"/></svg><h2>查询</h2>
    <div class="winbtns dark">
      <button aria-label="最小化" class="off"><svg viewBox="0 0 12 12"><path d="M1 6.500h10"/></svg></button>
      <button aria-label="最大化"><svg viewBox="0 0 12 12"><path d="M1.500 1.500h9v9h-9z"/></svg></button>
      <button aria-label="关闭"><svg viewBox="0 0 12 12"><path d="M1 1l10 10M11 1L1 11"/></svg></button>
    </div>
  </header>
  <div class="dtop">
    <div class="dtabs">
      <button>清单指引</button><i class="tsep"></i><button class="short">清单</button><i class="tsep"></i><button class="pressed">定额</button><i class="tsep"></i><button>人材机</button><i class="tsep"></i><button>补充人材机</button><i class="tsep"></i>
    </div>
    <button class="btn">插入(I)</button><button class="btn">替换(R)</button>
  </div>
  <div class="dbody">
    <div class="dleft">
      <div class="combo"><select aria-label="定额库"><option>湖北省市政工程消耗量定额及统一基</option></select><svg><use href="#chev"/></svg></div>
      <div class="ptabs"><button class="on">章节查询</button><button>条件查询</button></div>
      <div class="tabpage">
        <div class="treebox">
          <div class="tree-row">
            <ul class="nodes">
              <li class="d3 guides">十、水泥混凝土路面</li>
              <li class="d3 guides"><span class="hit">十一、水泥商品混凝土路</span></li>
              <li class="d3 guides">十二、水泥混凝土路面接</li>
              <li class="d3 guides has"><svg><use href="#chev"/></svg>十三、水泥混凝土路面伸</li>
              <li class="d3 guides">十四、水泥混凝土路面养</li>
              <li class="d3 guides has"><svg><use href="#chev"/></svg>十五、检查井周边加固处</li>
              <li class="d3 guides">十六、雨水口周边加固处</li>
              <li class="d2 g1 has"><svg><use href="#chev"/></svg>第四章&nbsp; 人行道及其他</li>
              <li class="d2 g1 has"><svg><use href="#chev"/></svg>第五章&nbsp; 交通管理设施</li>
              <li class="d1 has"><svg><use href="#chev"/></svg>桥涵护岸工程</li>
              <li class="d1 has"><svg><use href="#chev"/></svg>隧道工程</li>
              <li class="d1 has"><svg><use href="#chev"/></svg>市政管网</li>
              <li class="d1 has"><svg><use href="#chev"/></svg>钢筋工程</li>
              <li class="d1 has"><svg><use href="#chev"/></svg>拆除工程</li>
              <li class="d1 has"><svg><use href="#chev"/></svg>施工技术措施项目</li>
              <li class="d1 has open"><svg><use href="#chev"/></svg>土石方工程</li>
              <li class="d2 has"><svg><use href="#chev"/></svg>第一章&nbsp; &nbsp; 土方工程</li>
              <li class="d2 has"><svg><use href="#chev"/></svg>第二章&nbsp; &nbsp; 石方工程</li>
              <li class="d2 has open"><svg><use href="#chev"/></svg>第三章&nbsp; 土石方运输工程</li>
              <li class="d3 g2 has open"><svg><use href="#chev"/></svg>一、土石方运输</li>
              <li class="d4 g2"><span class="n">1.</span>人工运土方、淤泥</li>
              <li class="d4 g2"><span class="n">2.</span>人工运石方</li>
            </ul>
            <div class="vs"><svg class="up"><use href="#chev"/></svg><i class="thumb tall"></i><svg class="down"><use href="#chev"/></svg></div>
          </div>
          <div class="hs corner"><svg class="left"><use href="#chev"/></svg><i class="thumb long"></i><svg class="right"><use href="#chev"/></svg></div>
        </div>
        <div class="scope">
          <label><input type="radio" name="scope">标准</label><label><input type="radio" name="scope">补充</label><label><input type="radio" name="scope" checked>全部</label>
        </div>
      </div>
    </div>
    <div class="dright">
      <table class="grid quota">
        <colgroup><col class="c24"><col class="c62"><col class="c268"><col class="c55"><col class="c66"><col class="c80"></colgroup>
        <thead><tr><th></th><th class="hot">编码</th><th>名称</th><th>单位</th><th>含税单价</th><th>不含税单价</th></tr></thead>
        <tbody>
          <tr><th>1</th><td class="n">D2-282</td><td>水泥商品混凝土路面 厚度<span class="n">15cm</span></td><td class="n">100m2</td><td class="num">5535.97</td><td class="num">4924.64</td></tr>
          <tr><th>2</th><td class="n">D2-283</td><td>水泥商品混凝土路面 厚度<span class="n">18cm</span></td><td class="n">100m2</td><td class="num">6557.51</td><td class="num">5824.1</td></tr>
          <tr><th>3</th><td class="n">D2-284</td><td>水泥商品混凝土路面 厚度<span class="n">20cm</span></td><td class="n">100m2</td><td class="num">7240.52</td><td class="num">6426.11</td></tr>
          <tr><th class="cur">4</th><td class="n pick">D2-285</td><td>水泥商品混凝土路面 厚度<span class="n">22cm</span></td><td class="n">100m2</td><td class="num">7937.23</td><td class="num">7041</td></tr>
          <tr><th>5</th><td class="n">D2-286</td><td>水泥商品混凝土路面 厚度<span class="n">24cm</span></td><td class="n">100m2</td><td class="num">8619.93</td><td class="num">7642.69</td></tr>
          <tr><th>6</th><td class="n">D2-287</td><td>水泥商品混凝土路面 厚度<span class="n">28cm</span></td><td class="n">100m2</td><td class="num">9990.34</td><td class="num">8850.83</td></tr>
          <tr><th>7</th><td class="n">D2-288</td><td>水泥商品混凝土路面 厚度每增减<span class="n">1cm</span></td><td class="n">100m2</td><td class="num">341.65</td><td class="num">301.06</td></tr>
        </tbody>
      </table>
      <svg class="marks" viewBox="0 0 240 120" aria-hidden="true"><path d="M3 3.500h113M115 4.500h114M0 116.500h107M106 117.500h107" fill="none" stroke="#f00" stroke-width="3"/></svg>
    </div>
  </div>
</section>
</body>
</html>
```
FILE: styles.css
```css
* { box-sizing: border-box; }
body {
  margin: 0;
  height: 100vh;
  overflow: hidden;
  display: flex;
  flex-direction: column;
  position: relative;
  background: #efefef;
  color: #000;
  font: 12px/16px "Noto Sans", "Noto Sans CJK SC", sans-serif;
}
button, input, select { font: inherit; color: inherit; }
button { background: none; border: 0; padding: 0; white-space: nowrap; }
a { color: inherit; text-decoration: none; }
h1, h2 { margin: 0; font-size: 12px; font-weight: 400; }
i { font-style: normal; }
svg { display: block; flex: none; }
.defs { position: absolute; width: 0; height: 0; }
.i16 { width: 16px; height: 16px; }
.n { font-family: "DejaVu Sans Mono", monospace; font-size: 10px; font-weight: 400; }

/* title and menu */
.titlebar { position: relative; display: flex; align-items: center; height: 23px; flex: none; padding-left: 3px; gap: 4px; background: #fff; color: #999; }
.titlebar h1 { flex: 1; white-space: nowrap; overflow: hidden; font-family: Inter, "Noto Sans CJK SC", sans-serif; }
.winbtns { display: flex; margin-left: auto; }
.winbtns button { width: 46px; display: grid; place-items: center; }
.winbtns svg { width: 12px; height: 12px; fill: none; stroke: #888; }
.winbtns.dark svg { stroke: #000; stroke-width: 1.3; }
.winbtns.dark .off svg { stroke: #bbb; }
.ball { position: absolute; right: 212px; top: -28px; width: 46px; height: 46px; border-radius: 50%; border: 2px solid #9a9a9a; background: #3cc35a; box-shadow: 0 1px 4px rgba(0,0,0,.4), inset 0 0 0 1px #d9f5dd; color: #fff; font: 700 12px/14px "Open Sans", sans-serif; text-align: center; padding-top: 25px; }
.menubar { display: flex; align-items: center; height: 27px; flex: none; padding-left: 3px; }
.menubar a { display: flex; align-items: center; gap: 3px; margin-right: 11px; }
.menubar a.pic { margin-right: 8px; margin-left: -2px; }
.menubar > .i16 { margin-right: 6px; }
.mdi { margin-left: auto; display: flex; gap: 10px; padding-right: 5px; }
.mdi svg { width: 10px; height: 10px; fill: none; stroke: #000; stroke-width: 1.3; }

/* toolbars */
.toolbars { display: flex; gap: 2px; height: 27px; flex: none; padding-top: 1px; }
.tgroup { display: flex; align-items: center; height: 25px; padding-right: 1px; border-radius: 3px; background: linear-gradient(#fafafa, #f5f5f5 60%, #ededed); white-space: nowrap; }
.toolbars.second { padding-left: 1px; }
.grip { width: 3px; height: 15px; margin: 0 0 0 4px; background: repeating-linear-gradient(#bbb 0 2px, transparent 2px 4px); }
.ib { width: 23px; height: 22px; display: grid; place-items: center; flex: none; }
.arr { width: 12px; flex: none; display: grid; place-items: center; }
.arr::before, .mb::after { content: ""; width: 0; border: 3px solid transparent; border-top-color: #000; border-bottom: 0; }
.arr.dim::before { border-top-color: #888; }
.sep { width: 7px; height: 14px; flex: none; background: linear-gradient(#bbb, #bbb) 3px 0 / 1px 100% no-repeat; }
.sep.wide { width: 15px; background-position: 7px 0; }
.tb { display: flex; align-items: center; gap: 4px; height: 23px; padding: 0 3px; }
.tb.on { border: 1px solid #0a78d6; background: #dbe9f5; }
.locked { background: linear-gradient(#bbb, #bbb) 0 50% / 1px 14px no-repeat; padding-left: 6px; margin-right: 1px; }
.dimtext { color: #666; }
.part { display: flex; align-items: center; gap: 8px; padding: 0 2px 0 0; }
.part input { appearance: none; width: 12px; height: 12px; margin: 0; border: 1px solid #aaa; background: #fff; }
.mb { display: flex; align-items: center; gap: 4px; }
.mb::after { margin-right: 8px; }
.mb.w::after { margin: 0 9px 0 3px; }
.second .grip { margin-right: 5px; }
.gray svg { fill: #ddd; stroke: #b4b4b4; }
.blue svg { fill: #4a7ce0; stroke: #2955b5; }

/* side tabs */
.work { display: flex; flex: 1; min-height: 0; }
.side { position: relative; width: 29px; flex: none; overflow: hidden; display: flex; flex-direction: column; padding-top: 9px; background: linear-gradient(#777, #777) 24px 0 / 1px 100% no-repeat, linear-gradient(90deg, #f7f7f7 24px, #efefef 24px); }
.side a { position: relative; flex: none; padding: 18px 0 17px; margin-bottom: -9px; }
.side a::before, .side a::after { content: ""; position: absolute; left: 2px; top: 0; bottom: 0; width: 22px; background: #777; clip-path: polygon(0 10px, 100% 0, 100% 100%, 0 calc(100% - 10px)); }
.side a::after { left: 3px; top: 1px; bottom: 1px; background: #fff; }
.side .on { z-index: 1; font-weight: 700; }
.side .on::after { background: #efefef; width: 23px; }
.side span { position: relative; z-index: 2; display: block; width: 13px; margin-left: 7px; line-height: 13px; word-break: break-all; text-align: center; }
.spin { position: absolute; z-index: 3; left: 0; bottom: 2px; display: flex; }
.spin button { width: 12px; height: 12px; border: 1px solid #000; background: #d6d6d6; }
.spin svg { width: 10px; height: 10px; }
.spin .off { fill: #888; border-color: #999; }

/* grids */
.main { flex: 1; min-width: 0; display: flex; flex-direction: column; }
.pane { border: 1px solid #a3a3aa; background: #fff; }
.pane-row { display: flex; }
.view { flex: 1; min-width: 0; overflow: hidden; }
.grid { border-collapse: separate; border-spacing: 0; table-layout: fixed; width: 100%; }
.grid th, .grid td { padding: 1px 2px 0; height: 19px; line-height: 12px; border: 0 solid #bcbcbc; border-width: 0 1px 1px 0; font-weight: 400; text-align: left; overflow: hidden; }
.grid th { background: #efefef; text-align: center; }
.grid thead th { height: 22px; white-space: nowrap; }
.grid tbody th, .grid .num, .grid .code, .grid td.n, .tree { font-family: "DejaVu Sans Mono", monospace; font-size: 10px; }
.grid .num { text-align: right; white-space: nowrap; }
.grid .r { text-align: right; }
.grid .c { text-align: center; }
.grid .cur { background: #ffd08a; }
.grid .hot { background: linear-gradient(#f8d79c, #f2c264); }
.grid .pick { background: #d8eaf9; }
.grid .hi { color: #00d; font-weight: 700; }
.grid .raw { background: #fffaf5; }
.grid .code { padding-left: 20px; white-space: nowrap; }
.grid th.clip { text-align: left; white-space: nowrap; }
.bill tr > :last-child, .res tr > :last-child { border-right: 0; }
.bill .h13 > * { height: 13px; border-bottom: 0; }
.bill .h20 > * { height: 20px; }
.bill .h29 > * { height: 29px; }
.bill .h41 > * { height: 41px; }
.bill .h77 > * { height: 77px; }
.bill .sec td { background-color: #e1f3fe; }
.bill .sel td { background-color: #a8dbfb; }
.quota { width: 555px; }
.quota thead th { height: 21px; }
.c22 { width: 22px; } .c24 { width: 24px; } .c35 { width: 35px; } .c38 { width: 38px; } .c41 { width: 41px; }
.c49 { width: 49px; } .c55 { width: 55px; } .c57 { width: 57px; } .c58 { width: 58px; } .c62 { width: 62px; }
.c66 { width: 66px; } .c75 { width: 75px; } .c79 { width: 79px; } .c80 { width: 80px; } .c81 { width: 81px; }
.c109 { width: 109px; } .c119 { width: 119px; } .c126 { width: 126px; } .c127 { width: 127px; } .c268 { width: 268px; }

/* outline guides in the code column */
.grid .tree { --g: linear-gradient(#b4b4b4, #b4b4b4); background-repeat: no-repeat; background-image: var(--g), var(--g), var(--g); }
.grid .leaf { padding-left: 50px; background-size: 1px 100%, 1px 100%, 16px 1px; background-position: 8px 0, 28px 0, 28px 50%; }
.grid .leaf.end { background-size: 1px 100%, 1px 50%, 16px 1px; }
.grid .l1 { padding-left: 12px; background-size: 1px 100%, 5px 1px, 1px 30%; background-position: 8px 0, 8px 50%, 18px 100%; }
.grid .l1.end { background-size: 1px 50%, 5px 1px, 1px 30%; }
.grid .l2 { padding-left: 22px; background-size: 1px 100%, 1px 50%, 1px 46%; background-position: 8px 0, 18px 0, 28px 100%; }
.grid .cont { background-size: 1px 100%, 0 0, 0 0; background-position: 18px 0; }
.box { display: inline-block; vertical-align: middle; width: 13px; height: 13px; margin-right: 5px; border: 1px solid #aaa; background: linear-gradient(#000, #000) 50% 50% / 7px 1px no-repeat #fff; }
.grid input { appearance: none; display: block; width: 13px; height: 13px; margin: 0 auto; border: 1px solid #222; background: #fff; }

/* scroll bars */
.vs { width: 17px; flex: none; display: flex; flex-direction: column; align-items: center; background: #f0f0f0; color: #555; }
.vs svg, .hs svg { width: 10px; height: 10px; }
.vs .up { transform: rotate(-90deg); margin-top: 5px; }
.vs .down { transform: rotate(90deg); margin: auto 0 4px; }
.vs .thumb { width: 15px; height: 17px; background: #cdcdcd; }
.vs .low { margin-top: 115px; }
.vs .tall { height: 132px; margin-top: 83px; }
.hs { height: 17px; flex: none; display: flex; align-items: center; padding: 0 4px; background: #f0f0f0; color: #555; }
.hs .left { transform: rotate(180deg); }
.hs .right { margin-left: auto; }
.hs .thumb { width: 17px; height: 15px; margin-left: 4px; background: #cdcdcd; }
.hs .long { width: 98px; }
.hs.corner { padding-right: 21px; }

/* lower area */
.subtabs { height: 30px; flex: none; display: flex; align-items: center; padding-top: 6px; padding-left: 2px; gap: 4px; }
.subtabs button { padding: 0 5px; height: 20px; }
button.pressed { border: 1px solid; border-color: #777 #fff #fff #777; background: #f7f7f7; }
.tsep { width: 2px; height: 20px; flex: none; background: linear-gradient(90deg, #a0a0a0 1px, #fff 1px); }
.bottom { flex: 1; min-height: 0; display: flex; }
.lower { flex: 1; min-width: 0; display: flex; flex-direction: column; margin-bottom: 1px; }
.actions { width: 129px; flex: none; padding: 5px 6px 0 9px; overflow: hidden; }
.btns { display: grid; grid-template-columns: 1fr 1fr; gap: 6px; padding: 0 8px 0 3px; }
.btn { height: 23px; border: 1px solid #adadad; background: #e1e1e1; }
.full { grid-column: 1 / -1; }
fieldset { margin: 3px 0 0; padding: 4px 0 20px; border: 1px solid #dcdcdc; display: grid; grid-template-columns: 67px 1fr; grid-auto-rows: 23px; align-items: center; }
legend { margin-left: 4px; padding: 0 1px; }
fieldset label, .scope label { display: flex; align-items: center; gap: 2px; white-space: nowrap; }
input[type="radio"] { appearance: none; width: 13px; height: 13px; margin: 0; flex: none; border: 1px solid #444; border-radius: 50%; background: #fff; }
input[type="radio"]:checked { background: radial-gradient(circle, #222 3px, #fff 4px); }

/* status bar */
.status { display: flex; gap: 2px; height: 22px; flex: none; padding: 2px 2px 1px 0; background: #f7f7f7; white-space: nowrap; }
.status span { border: 1px solid #d2d2d2; padding-left: 1px; line-height: 18px; background: linear-gradient(#fafafa, #ececec); overflow: hidden; }
.s1 { width: 331px; } .s2 { width: 344px; } .s3 { width: 268px; } .s4 { width: 208px; } .s5 { flex: 1; }

/* task bar */
.taskbar { display: flex; height: 40px; flex: none; background: #02090d; color: #fff; }
.start { width: 48px; display: grid; place-items: center; }
.start svg { width: 16px; height: 16px; }
.search { width: 344px; display: flex; align-items: center; padding: 0 14px 0 9px; background: #333; }
.cort { width: 22px; height: 22px; }
.search input { flex: 1; min-width: 0; margin: 0 5px; padding: 0; border: 0; outline: 0; background: none; font-size: 14px; }
.search input::placeholder { color: #999; opacity: 1; }
.mic { width: 12px; height: 18px; }
.apps { display: flex; gap: 1px; padding-left: 3px; }
.apps button { width: 48px; display: grid; place-items: center; border-bottom: 2px solid transparent; }
.apps svg { width: 24px; height: 24px; }
.apps .big svg { width: 28px; height: 28px; margin-bottom: 4px; }
.apps .run { background: linear-gradient(#79b8f2, #79b8f2) 50% 100% / 40px 2px no-repeat; border: 0; }
.apps .cur { background-color: #3a4246; background-size: 48px 2px; }
.tray { margin-left: auto; display: flex; align-items: center; gap: 7px; padding-right: 23px; }
.cpu, time { text-align: center; line-height: 17px; }
.cpu { width: 60px; margin-right: 7px; }
.tray button svg { width: 16px; height: 14px; }
.ime { font-size: 14px; margin-left: 1px; }
.sogou { width: 17px; height: 17px; margin: 0 6px; }
time { width: 66px; line-height: 18px; }
.note { position: relative; margin-left: 9px; }
.note svg { width: 18px; height: 18px; }
.note span { position: absolute; left: 7px; top: 6px; width: 16px; height: 16px; border-radius: 50%; background: #444; border: 1px solid #999; font-size: 11px; font-weight: 700; line-height: 14px; text-align: center; }

/* query dialog */
.dialog { position: absolute; left: 190px; top: 103px; width: 853px; height: 514px; display: flex; flex-direction: column; border: 1px solid #3392f0; background: #efefef; box-shadow: 0 4px 14px rgba(0,0,0,.4); }
.dialog header { display: flex; align-items: center; height: 30px; flex: none; padding-left: 8px; gap: 5px; background: #fff; }
.dtop { display: flex; height: 27px; flex: none; overflow: hidden; gap: 5px; }
.dtop .btn { width: 72px; flex: none; margin-top: 3px; }
.dtabs { display: flex; flex: 1; }
.dtabs button { height: 20px; padding: 0 10px; }
.dtabs button:first-child { padding-left: 7px; }
.dtabs .short { min-width: 50px; padding: 0 16px 0 9px; }
.dtabs .pressed { margin: 1px 5px 0; padding: 0 7px; }
.dialog .dtop > :last-child { margin-right: -2px; }
.dbody { flex: 1; min-height: 0; display: flex; gap: 3px; }
.dleft { width: 216px; flex: none; display: flex; flex-direction: column; }
.combo { position: relative; height: 20px; flex: none; }
.combo select { appearance: none; width: 100%; height: 20px; border: 1px solid #adadad; border-radius: 0; background: #e1e1e1; padding: 0 18px 0 3px; }
.combo svg { position: absolute; right: 4px; top: 5px; width: 10px; height: 10px; transform: rotate(90deg); color: #555; }
.ptabs { display: flex; align-items: flex-end; height: 22px; flex: none; padding-left: 1px; }
.ptabs button { height: 18px; padding: 0 4px; border: 1px solid #dcdcdc; border-bottom: 0; }
.ptabs .on { height: 20px; padding: 0 6px; background: #fff; }
.tabpage { flex: 1; min-height: 0; display: flex; flex-direction: column; margin: 0 2px 1px 1px; padding: 4px 1px 0 3px; border: 1px solid #dcdcdc; border-left-color: #fff; }
.treebox { flex: none; border: 1px solid #828790; background: #fff; padding: 1px; }
.treebox .hs { height: 15px; }
.tree-row { display: flex; height: 348px; overflow: hidden; }
.nodes { flex: 1; min-width: 0; overflow: hidden; list-style: none; margin: 0; padding: 0; }
.nodes li { display: flex; align-items: center; height: 16px; white-space: nowrap; background-repeat: no-repeat; --v: repeating-linear-gradient(#888 0 1px, transparent 1px 2px); --h: repeating-linear-gradient(90deg, #888 0 1px, transparent 1px 2px); }
.nodes svg { width: 10px; height: 10px; margin-right: 7px; color: #999; }
.nodes .open svg { transform: rotate(90deg); color: #333; }
.d1 { padding-left: 5px; } .d2 { padding-left: 24px; } .d3 { padding-left: 60px; } .d3.has { padding-left: 43px; }
.nodes .d4 { padding-left: 79px; background-image: var(--v), var(--v), var(--h); background-size: 1px 100%, 1px 100%, 8px 1px; background-position: 30px 0, 68px 0, 68px 8px; }
.nodes .guides { background-image: var(--v), var(--v), var(--v), var(--h); background-size: 1px 100%, 1px 100%, 1px 100%, 9px 1px; background-position: 11px 0, 30px 0, 49px 0, 49px 8px; }
.nodes .guides.has { background-image: var(--v), var(--v); background-size: 1px 100%; background-position: 11px 0, 30px 0; }
.nodes .g1 { background-image: var(--v); background-size: 1px 100%; background-position: 11px 0; }
.nodes .d3.g2 { background-image: var(--v); background-size: 1px 100%; background-position: 30px 0; }
.hit { background: #d9d9d9; line-height: 16px; }
.scope { flex: 1; display: flex; align-items: center; gap: 20px; padding: 0 0 2px 10px; }
.scope input { width: 11px; height: 11px; border-color: #999; }
.scope label { gap: 9px; }
.dright { position: relative; flex: 1; min-width: 0; background: #fff; border: 1px solid #a3a3aa; padding-top: 1px; }
.marks { position: absolute; left: 83px; top: 37px; width: 240px; height: 120px; }
```
